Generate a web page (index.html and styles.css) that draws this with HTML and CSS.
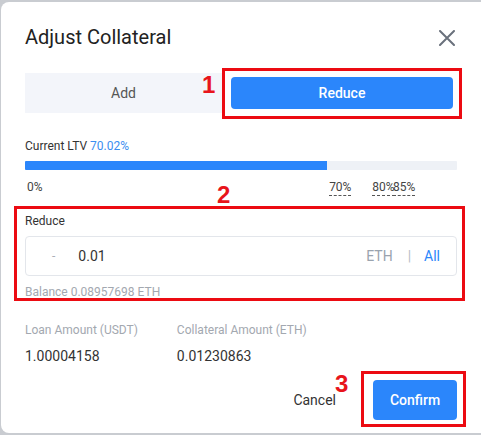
FILE: index.html
```html
<!DOCTYPE html>
<html>
<head>
<meta charset="utf-8">
<link rel="stylesheet" href="styles.css">
</head>
<body>
<div class="dialog">
  <div class="header">
    <h1 class="title">Adjust Collateral</h1>
    <button class="close" aria-label="Close">
      <svg width="16" height="16" viewBox="0 0 16 16"><path d="M1 1 L15 15 M15 1 L1 15" stroke="#6a717c" stroke-width="2" fill="none" stroke-linecap="round"/></svg>
    </button>
  </div>

  <div class="tabs">
    <div class="tab tab-add">Add</div>
    <div class="tab tab-reduce">Reduce</div>
    <div class="annot box1"></div>
    <div class="annot-num num1">1</div>
  </div>

  <div class="ltv-label">Current LTV <span class="blue">70.02%</span></div>
  <div class="bar"><div class="bar-fill" style="width:70.02%"></div></div>
  <div class="scale">
    <span class="mark mark0">0%</span>
    <span class="mark dashed" style="left:70.4%">70%</span>
    <span class="mark dashed" style="left:80.4%">80%</span>
    <span class="mark dashed" style="left:85.2%">85%</span>
    <div class="annot-num num2">2</div>
  </div>

  <div class="reduce-section">
    <div class="field-label">Reduce</div>
    <div class="input">
      <span class="minus">-</span>
      <span class="amount">0.01</span>
      <span class="unit">ETH</span>
      <span class="sep">|</span>
      <span class="all">All</span>
    </div>
    <div class="balance">Balance 0.08957698 ETH</div>
    <div class="annot box2"></div>
  </div>

  <div class="stats">
    <div class="stat">
      <div class="stat-label">Loan Amount (USDT)</div>
      <div class="stat-value">1.00004158</div>
    </div>
    <div class="stat">
      <div class="stat-label">Collateral Amount (ETH)</div>
      <div class="stat-value">0.01230863</div>
    </div>
  </div>

  <div class="footer">
    <div class="annot-num num3">3</div>
    <button class="cancel">Cancel</button>
    <button class="confirm">Confirm</button>
    <div class="annot box3"></div>
  </div>
</div>
</body>
</html>
```

FILE: styles.css
```css
* { box-sizing: border-box; }
html, body { margin: 0; padding: 0; }
body {
  background: #c9ccd1;
  width: 481px;
  height: 435px;
  overflow: hidden;
  font-family: Roboto, "Liberation Sans", sans-serif;
  color: #333;
}
.dialog {
  position: relative;
  margin: 2px 0 0 1px;
  width: 482px;
  height: 431px;
  background: #fff;
  border-radius: 8px 0 0 8px;
  padding: 21px 24px 0 24px;
}
.header {
  display: flex;
  justify-content: space-between;
  align-items: center;
  height: 28px;
  padding-right: 4px;
}
.title {
  margin: 0;
  font-size: 20px;
  font-weight: 400;
  line-height: 28px;
  color: #222;
}
.close {
  border: 0;
  background: none;
  padding: 0;
  width: 16px;
  height: 16px;
  margin-top: 2px;
  margin-right: 0;
  display: flex;
}
.tabs {
  position: relative;
  margin-top: 22px;
  width: 432px;
  height: 40px;
  display: flex;
  align-items: center;
}
.tab {
  font-size: 14px;
  display: flex;
  align-items: center;
  justify-content: center;
}
.tab-add {
  width: 197px;
  height: 40px;
  background: #f3f5fa;
  color: #555;
}
.tab-reduce {
  margin-left: 9px;
  width: 222px;
  height: 32px;
  background: #2b86fb;
  color: #fff;
  font-weight: 500;
  border-radius: 4px;
}
.annot {
  position: absolute;
  border: 3px solid #ec0b12;
  pointer-events: none;
}
.box1 { left: 197px; top: -5px; width: 240px; height: 51px; }
.annot-num {
  position: absolute;
  font-family: "Liberation Sans", Arial, sans-serif;
  font-weight: 700;
  font-size: 24px;
  line-height: 24px;
  color: #e8141b;
}
.num1 { left: 177px; top: 0px; }
.ltv-label {
  margin-top: 25px;
  font-size: 12px;
  line-height: 16px;
  color: #333;
}
.blue { color: #3a8ef0; }
.bar {
  margin-top: 7px;
  width: 432px;
  height: 9px;
  background: #eef1f6;
  border-radius: 1px;
  overflow: hidden;
}
.bar-fill {
  height: 100%;
  background: #2b86fb;
}
.scale {
  position: relative;
  margin-top: 9px;
  height: 17px;
  width: 432px;
  font-size: 12px;
  line-height: 16px;
}
.mark {
  position: absolute;
  top: 0;
  color: #444;
}
.mark0 { left: 2px; }
.dashed { border-bottom: 1px dashed #555; }
.num2 { left: 192px; top: 4px; }
.reduce-section {
  position: relative;
  margin-top: 17px;
}
.field-label {
  font-size: 12px;
  line-height: 16px;
  color: #333;
}
.input {
  margin-top: 7px;
  width: 432px;
  height: 40px;
  border: 1px solid #e3e6eb;
  border-radius: 4px;
  display: flex;
  align-items: center;
  font-size: 14px;
  padding: 0 16px 0 26px;
}
.minus { color: #aab0b8; font-size: 12px; }
.amount { margin-left: 23px; color: #333; flex: 1; }
.unit { color: #9aa3ae; }
.sep { color: #b8bec6; margin: 0 13px 0 15px; }
.all { color: #2b86fb; }
.balance {
  margin-top: 8px;
  font-size: 12px;
  line-height: 16px;
  color: #a3a8b0;
}
.box2 { left: -11px; top: -7px; width: 451px; height: 95px; }
.stats {
  display: flex;
  margin-top: 22px;
}
.stat { margin-right: 39px; }
.stat-label {
  font-size: 12px;
  line-height: 17px;
  color: #a3a8b0;
}
.stat-value {
  margin-top: 7px;
  font-size: 14px;
  line-height: 20px;
  color: #333;
}
.footer {
  position: relative;
  margin-top: 14px;
  width: 432px;
  display: flex;
  justify-content: flex-end;
  align-items: center;
}
.cancel {
  border: 0;
  background: none;
  font-family: inherit;
  font-size: 14px;
  color: #333;
  padding: 0;
  margin-right: 37px;
}
.confirm {
  border: 0;
  width: 84px;
  height: 40px;
  background: #2b86fb;
  color: #fff;
  font-family: inherit;
  font-size: 14px;
  font-weight: 500;
  border-radius: 4px;
}
.box3 { left: 336px; top: -9px; width: 105px; height: 56px; }
.num3 { left: 310px; top: -8px; }
```
